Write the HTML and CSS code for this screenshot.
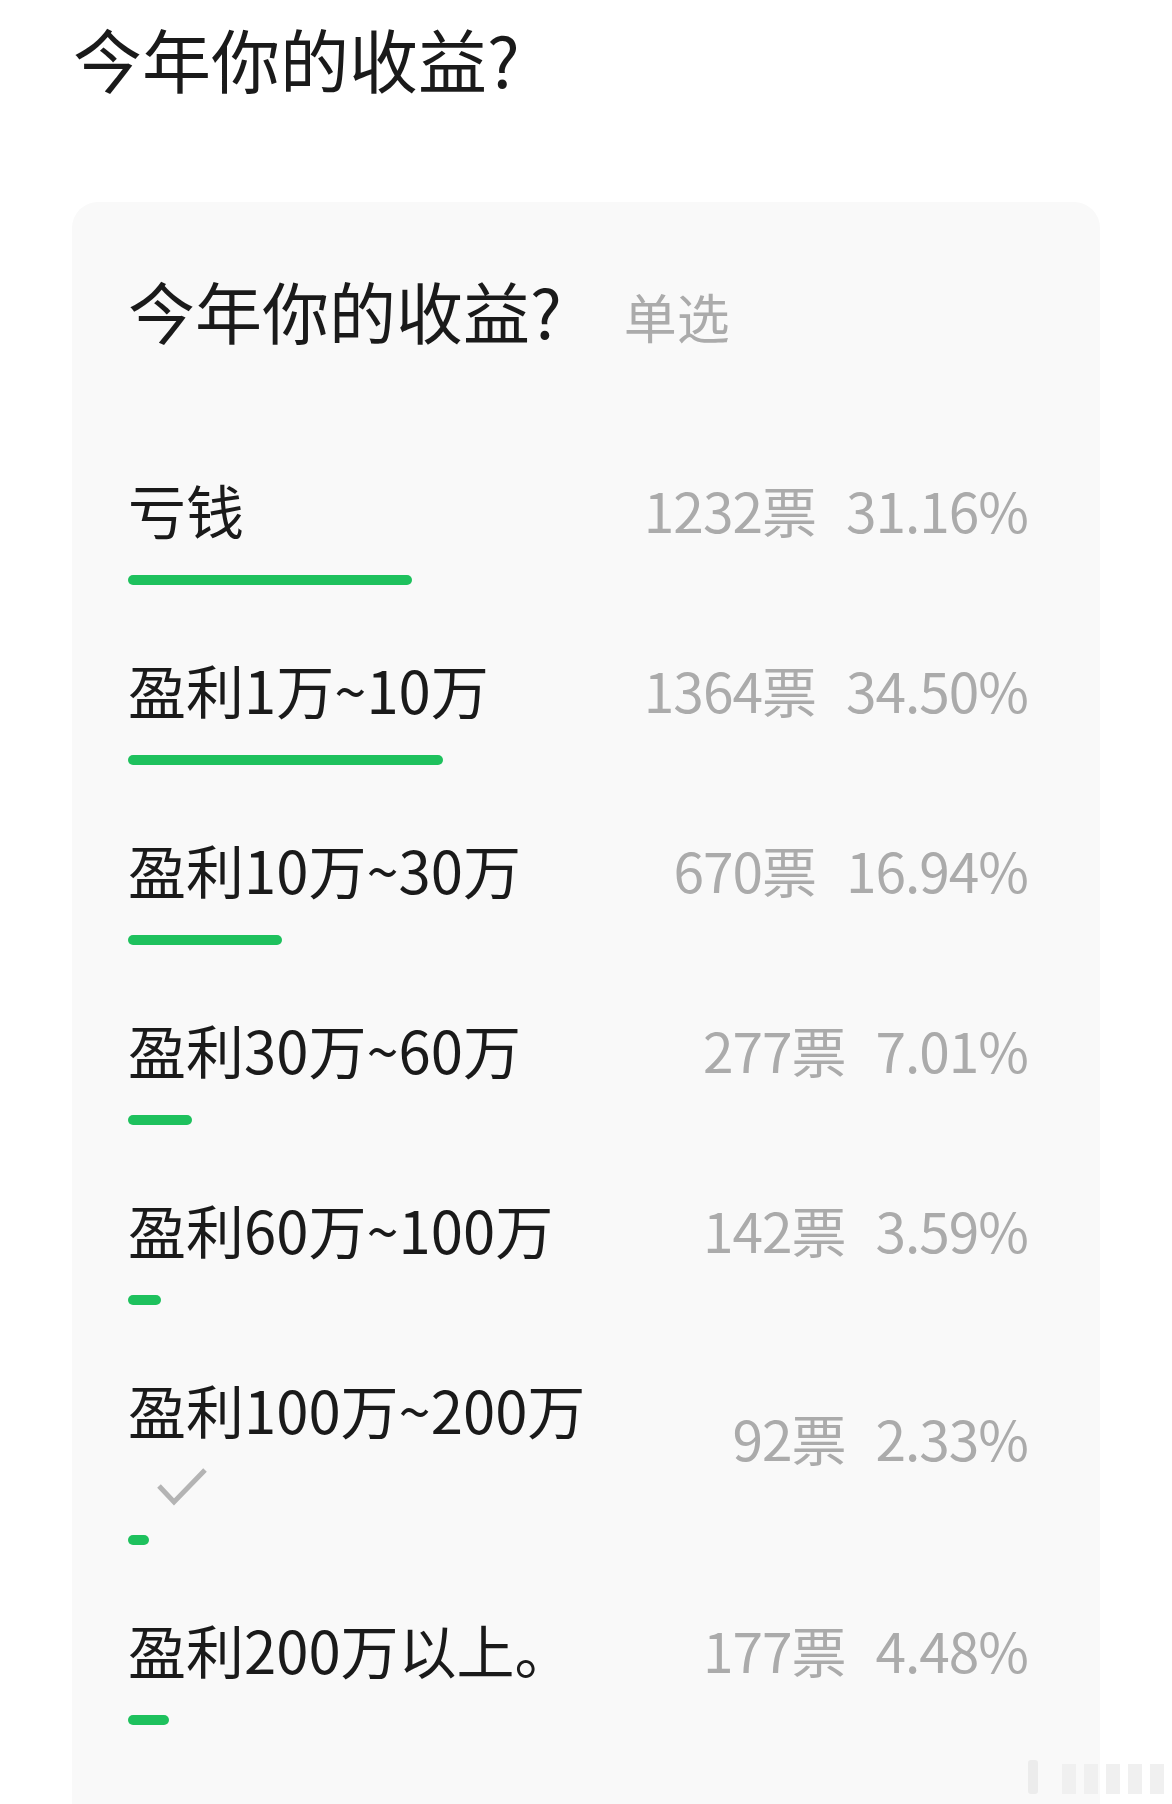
FILE: index.html
```html
<!DOCTYPE html>
<html lang="zh-CN">
<head>
<meta charset="utf-8">
<title>今年你的收益?</title>
<link rel="stylesheet" href="styles.css">
</head>
<body>
<h1 class="page-title">今年你的收益?</h1>
<section class="poll">
  <div class="poll-head">
    <h2 class="poll-title">今年你的收益?</h2>
    <span class="poll-type">单选</span>
  </div>
  <ul class="options">
    <li class="option">
      <div class="option-head">
        <span class="label">亏钱</span>
        <span class="stats"><span>1232票</span><span>31.16%</span></span>
      </div>
      <div class="bar" style="width:284px"></div>
    </li>
    <li class="option">
      <div class="option-head">
        <span class="label">盈利1万~10万</span>
        <span class="stats"><span>1364票</span><span>34.50%</span></span>
      </div>
      <div class="bar" style="width:315px"></div>
    </li>
    <li class="option">
      <div class="option-head">
        <span class="label">盈利10万~30万</span>
        <span class="stats"><span>670票</span><span>16.94%</span></span>
      </div>
      <div class="bar" style="width:154px"></div>
    </li>
    <li class="option">
      <div class="option-head">
        <span class="label">盈利30万~60万</span>
        <span class="stats"><span>277票</span><span>7.01%</span></span>
      </div>
      <div class="bar" style="width:64px"></div>
    </li>
    <li class="option">
      <div class="option-head">
        <span class="label">盈利60万~100万</span>
        <span class="stats"><span>142票</span><span>3.59%</span></span>
      </div>
      <div class="bar" style="width:33px"></div>
    </li>
    <li class="option option-checked">
      <div class="option-head">
        <div class="label-block">
          <span class="label">盈利100万~200万</span>
          <div class="check-row">
            <svg class="check" width="52" height="40" viewBox="0 0 52 40"><polyline points="3,20 18,36 49,4" fill="none" stroke="#b4b4b4" stroke-width="5"/></svg>
          </div>
        </div>
        <span class="stats stats-raised"><span>92票</span><span>2.33%</span></span>
      </div>
      <div class="bar bar-tight" style="width:21px"></div>
    </li>
    <li class="option">
      <div class="option-head">
        <span class="label">盈利200万以上。</span>
        <span class="stats"><span>177票</span><span>4.48%</span></span>
      </div>
      <div class="bar" style="width:41px"></div>
    </li>
  </ul>
</section>
<div class="watermark"><span class="wm-a"></span><span class="wm-b"></span><span class="wm-b"></span><span class="wm-b"></span><span class="wm-b"></span><span class="wm-b"></span></div>
</body>
</html>
```

FILE: styles.css
```css
html, body {
  margin: 0;
  padding: 0;
}
body {
  background: #ffffff;
  font-family: "Noto Sans CJK SC", "Noto Sans", sans-serif;
  color: #1a1a1a;
  height: 1804px;
  overflow: hidden;
  position: relative;
}
.page-title {
  margin: 18px 0 0 73px;
  font-size: 69px;
  font-weight: 400;
  line-height: 80px;
}
.poll {
  margin: 104px 0 0 72px;
  width: 1028px;
  height: 1602px;
  box-sizing: border-box;
  background: #f9f9f9;
  border-radius: 26px 26px 0 0;
  padding: 68px 72px 0 56px;
}
.poll-head {
  display: flex;
  align-items: baseline;
  gap: 62px;
}
.poll-title {
  margin: 0;
  font-size: 67px;
  font-weight: 400;
  line-height: 80px;
}
.poll-type {
  font-size: 53px;
  color: #ababab;
}
.options {
  list-style: none;
  margin: 120px 0 0;
  padding: 0;
}
.option + .option {
  margin-top: 69px;
}
.option-head {
  display: flex;
  justify-content: space-between;
  align-items: center;
}
.label {
  display: block;
  font-size: 58px;
  line-height: 70px;
  color: #1a1a1a;
}
.stats {
  display: flex;
  gap: 30px;
  font-size: 55px;
  font-weight: 400;
  letter-spacing: -1px;
  line-height: 70px;
  color: #ababab;
}
.stats-raised {
  margin-bottom: 14px;
}
.check-row {
  height: 70px;
  padding-left: 28px;
  padding-top: 22px;
  box-sizing: border-box;
}
.check {
  display: block;
}
.bar {
  height: 10px;
  border-radius: 5px;
  background: #1ec15d;
  margin-top: 31px;
}
.bar-tight {
  margin-top: 21px;
}
.watermark {
  position: absolute;
  right: 8px;
  bottom: 10px;
  display: flex;
  align-items: flex-end;
  gap: 8px;
}
.wm-a {
  width: 10px;
  height: 34px;
  border-radius: 3px;
  background: #ececec;
  margin-right: 16px;
}
.wm-b {
  width: 14px;
  height: 30px;
  background: #f0f0f0;
}
```
